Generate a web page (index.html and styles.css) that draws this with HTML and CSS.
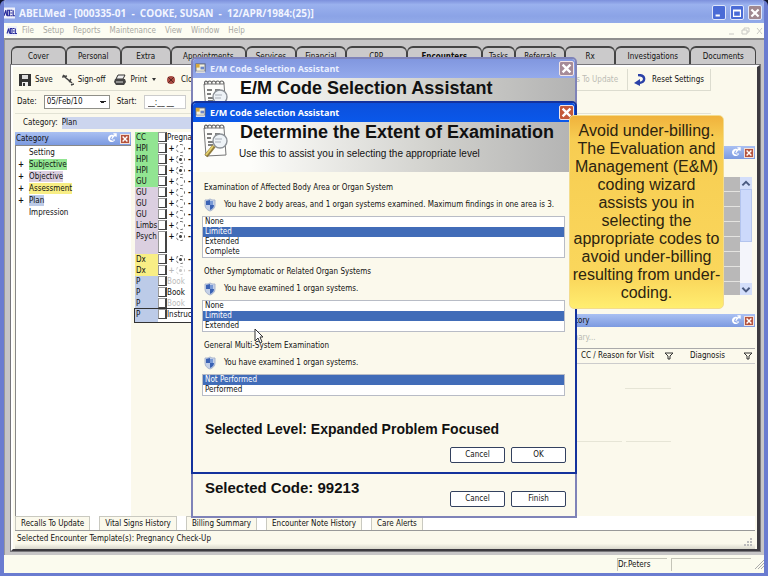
FILE: index.html
```html
<!DOCTYPE html>
<html lang="en">
<head>
    <meta charset="UTF-8">
    <meta name="viewport" content="width=device-width, initial-scale=1.0">
    <title>ABELMed</title>
    <link rel="stylesheet" href="styles.css">
</head>
<body>

    <!-- shared icons -->
    <svg class="sprite" aria-hidden="true">
        <symbol id="logo" viewBox="0 0 12 12">
            <rect width="12" height="12" fill="#eef0fb"/>
            <path d="M0 9L2 3L3 9M4 3V9H6V3ZM7 3H9M7 6H9M7 9H9M10 3V9H12" fill="none" stroke="#2b2e9c" stroke-width="1.3"/>
        </symbol>
        <symbol id="x" viewBox="0 0 10 10">
            <path d="M2 2L8 8M8 2L2 8" stroke="#fff" stroke-width="1.8"/>
        </symbol>
        <symbol id="form" viewBox="0 0 12 12">
            <rect x="1" y="1" width="10" height="8" fill="#f4f1dc" stroke="#555b70"/>
            <rect x="1" y="1" width="4" height="4" fill="#d8a93c"/>
            <rect x="6" y="4" width="4" height="3" fill="#6b86c8"/>
            <path d="M1 10H11" stroke="#ddd" stroke-width="2"/>
        </symbol>
        <symbol id="notes" viewBox="0 0 26 34">
            <path d="M2 4H22L24 31L4 32Z" fill="#fdfdfb" stroke="#777"/>
            <path d="M3 5C1 0 6 0 6 4C5 0 10 0 10 4C9 0 14 0 14 4C13 0 18 0 18 4C17 0 22 0 22 4" fill="none" stroke="#666" stroke-width="1.2"/>
            <path d="M5 10H10M13 10H18M5 14H9M6 18H11M6 21H11" stroke="#555" stroke-width="1.4"/>
            <circle cx="18" cy="17" r="7" fill="#eef3f7" stroke="#8d9298" stroke-width="1.4"/>
            <path d="M13 15H20M13 18H19" stroke="#a9afb8"/>
            <path d="M12 22L4 32" stroke="#8f7a3b" stroke-width="4"/>
            <path d="M11 22L4 31" stroke="#e3cf6c" stroke-width="2"/>
        </symbol>
        <symbol id="shield" viewBox="0 0 12 14">
            <path d="M6 1C8 2 9 2 11 2V7C11 10 9 12 6 13C3 12 1 10 1 7V2C3 2 4 2 6 1Z" fill="#c3d0e8" stroke="#a9b5cd"/>
            <path d="M6 2V7H10C10 10 8 11 6 12V7H2V3Z" fill="#3a62b4"/>
            <path d="M6 3L9 3V7H6Z" fill="#7899d6"/>
        </symbol>
        <symbol id="pin" viewBox="0 0 12 12">
            <path d="M9 3A4 4 0 1 0 10 7L7 7L7 4Z" fill="#fff"/>
            <path d="M6 6L11 1M8 1H11V4" fill="none" stroke="#fff" stroke-width="1.4"/>
            <path d="M6 4L5 7L8 8" fill="none" stroke="#6b8de0"/>
        </symbol>
        <symbol id="funnel" viewBox="0 0 10 8">
            <path d="M1 1H9L6 4V7H4V4Z" fill="none" stroke="#333"/>
        </symbol>
    </svg>

    <div class="app">
        <header class="titlebar">
            <svg class="logo"><use href="#logo"/></svg>
            <h1>ABELMed - [000335-01 &nbsp;- &nbsp;COOKE, SUSAN &nbsp;- &nbsp;12/APR/1984:(25)]</h1>
            <button class="win-btn" aria-label="Minimize"><svg viewBox="0 0 14 14"><path d="M3 10H8" stroke="#fff" stroke-width="2.4"/></svg></button>
            <button class="win-btn" aria-label="Maximize"><svg viewBox="0 0 14 14"><path d="M3 3.500H11V11H3ZM3 4.500H11" fill="none" stroke="#fff" stroke-width="1.4"/></svg></button>
            <button class="win-btn win-close" aria-label="Close"><svg viewBox="0 0 10 10"><use href="#x"/></svg></button>
        </header>

        <nav class="menu">
            <svg class="menu-logo"><use href="#logo"/></svg>
            <a href="#">File</a>
            <a href="#">Setup</a>
            <a href="#">Reports</a>
            <a href="#">Maintenance</a>
            <a href="#">View</a>
            <a href="#">Window</a>
            <a href="#">Help</a>
            <svg class="mdi" viewBox="0 0 36 8"><path d="M1 7H6M14 3H19V7H14ZM16 3V1H21V5H19M29 1L34 7M34 1L29 7" fill="none" stroke="#c9c9c4"/></svg>
        </nav>

        <main class="workspace">
            <div class="tabs">
                <button>Cover</button>
                <button>Personal</button>
                <button>Extra</button>
                <button>Appointments</button>
                <button>Services</button>
                <button>Financial</button>
                <button>CPP</button>
                <button class="active">Encounters</button>
                <button>Tasks</button>
                <button>Referrals</button>
                <button>Rx</button>
                <button>Investigations</button>
                <button>Documents</button>
            </div>

            <div class="panel">
                <div class="toolbar">
                    <button><svg class="tool-icon" viewBox="0 0 12 12"><path d="M0 0H12V12H0Z" fill="#333"/><path d="M3 1H9V5H3Z" fill="#ddd"/><path d="M3 8H9V12H3Z" fill="#eee"/><path d="M4 9H6V12H4Z" fill="#333"/></svg>Save</button>
                    <button><svg class="tool-icon" viewBox="0 0 12 12"><path d="M1 1L4 4M0 3L5 2M4 4L10 9M7 8L9 5M9 11L12 10" fill="none" stroke="#444" stroke-width="1.6"/></svg>Sign-off</button>
                    <button><svg class="tool-icon" viewBox="0 0 12 12"><path d="M4 1H11L9 5H2Z" fill="#eee" stroke="#333"/><path d="M1 5H11L12 8L10 11H2L0 8Z" fill="#444"/><path d="M2 8H9" stroke="#ddd"/></svg>Print <span class="caret"></span></button>
                    <button><svg class="tool-icon" viewBox="0 0 12 12"><circle cx="6" cy="6" r="4" fill="#a94b43"/><path d="M3 3L9 9M9 3L3 9" stroke="#5c2620"/></svg>Close</button>
                    <button class="update" disabled>Recalls To Update</button>
                    <button class="reset"><svg class="tool-icon" viewBox="0 0 12 12"><path d="M4 1C12 1 12 8 5 9" fill="none" stroke="#2b41a8" stroke-width="2.4"/><path d="M6 5V12L0 9Z" fill="#2b41a8"/></svg>Reset Settings</button>
                </div>

                <div class="fields">
                    <label for="date">Date:</label>
                    <select id="date"><option>05/Feb/10</option></select>
                    <label for="start">Start:</label>
                    <input id="start" type="text" value="__:__ __">
                </div>

                <div class="category-row">
                    <label for="category">Category:</label>
                    <input id="category" type="text" value="Plan">
                </div>

                <div class="content">
                    <aside class="tree">
                        <div class="bar">
                            <h2>Category</h2>
                            <svg class="pin"><use href="#pin"/></svg>
                            <button class="bar-close" aria-label="Close"><svg viewBox="0 0 10 10"><use href="#x"/></svg></button>
                        </div>
                        <ul>
                            <li>Setting</li>
                            <li class="node"><span class="green">Subjective</span></li>
                            <li class="node"><span class="mauve">Objective</span></li>
                            <li class="node"><span class="yellow">Assessment</span></li>
                            <li class="node"><span class="blue">Plan</span></li>
                            <li>Impression</li>
                        </ul>
                    </aside>

                    <section class="notes">
                        <div class="note"><b class="green">CC</b><input type="checkbox" aria-label="CC"><span>Pregnancy</span></div>
                        <div class="note"><b class="green">HPI</b><input type="checkbox" aria-label="HPI"><i>+</i><input type="radio" aria-label="HPI"><i>-</i></div>
                        <div class="note"><b class="green">HPI</b><input type="checkbox" aria-label="HPI"><i>+</i><input type="radio" aria-label="HPI" checked><i>-</i></div>
                        <div class="note"><b class="green">HPI</b><input type="checkbox" aria-label="HPI"><i>+</i><input type="radio" aria-label="HPI" checked><i>-</i></div>
                        <div class="note"><b class="green">GU</b><input type="checkbox" aria-label="GU"><i>+</i><input type="radio" aria-label="GU"><i>-</i></div>
                        <div class="note"><b class="mauve">GU</b><input type="checkbox" aria-label="GU"><i>+</i><input type="radio" aria-label="GU"><i>-</i></div>
                        <div class="note"><b class="mauve">GU</b><input type="checkbox" aria-label="GU"><i>+</i><input type="radio" aria-label="GU"><i>-</i></div>
                        <div class="note"><b class="mauve">GU</b><input type="checkbox" aria-label="GU"><i>+</i><input type="radio" aria-label="GU"><i>-</i></div>
                        <div class="note"><b class="mauve">Limbs</b><input type="checkbox" aria-label="Limbs"><i>+</i><input type="radio" aria-label="Limbs"><i>-</i></div>
                        <div class="note tall"><b class="mauve">Psych</b><input type="checkbox" aria-label="Psych"><i>+</i><input type="radio" aria-label="Psych" checked><i>-</i></div>
                        <div class="note"><b class="yellow">Dx</b><input type="checkbox" aria-label="Dx"><i>+</i><input type="radio" aria-label="Dx" checked><i>-</i></div>
                        <div class="note off"><b class="yellow">Dx</b><input type="checkbox" aria-label="Dx"><i>+</i><input type="radio" aria-label="Dx" checked><i>-</i></div>
                        <div class="note off"><b class="blue">P</b><input type="checkbox" aria-label="Plan"><span>Book</span></div>
                        <div class="note"><b class="blue">P</b><input type="checkbox" aria-label="Plan"><span>Book</span></div>
                        <div class="note off"><b class="blue">P</b><input type="checkbox" aria-label="Plan"><span>Book</span></div>
                        <div class="note current"><b class="blue">P</b><input type="checkbox" aria-label="Plan"><span>Instructions</span></div>
                    </section>

                    <section class="side">
                        <div class="bar">
                            <svg class="pin"><use href="#pin"/></svg>
                            <button class="bar-close" aria-label="Close"><svg viewBox="0 0 10 10"><use href="#x"/></svg></button>
                        </div>
                        <div class="grid">
                            <div class="cells"></div>
                            <div class="scroll">
                                <svg viewBox="0 0 10 10"><path d="M2 7L5 4L8 7" fill="none" stroke="#4a5a80" stroke-width="1.6"/></svg>
                                <div class="thumb"></div>
                                <svg viewBox="0 0 10 10"><path d="M2 4L5 7L8 4" fill="none" stroke="#4a5a80" stroke-width="1.6"/></svg>
                            </div>
                        </div>
                        <div class="bar history">
                            <h2>History</h2>
                            <svg class="pin"><use href="#pin"/></svg>
                            <button class="bar-close" aria-label="Close"><svg viewBox="0 0 10 10"><use href="#x"/></svg></button>
                        </div>
                        <p class="summary">Summary...</p>
                        <table class="visits">
                            <tr>
                                <th class="reason">CC / Reason for Visit</th>
                                <th class="filter"><svg class="funnel"><use href="#funnel"/></svg></th>
                                <th class="diagnosis">Diagnosis</th>
                                <th class="filter"><svg class="funnel"><use href="#funnel"/></svg></th>
                            </tr>
                        </table>
                        <div class="rules"><hr><div><hr><hr></div></div>
                    </section>
                </div>

                <div class="bottom-tabs">
                    <button>Recalls To Update</button>
                    <button>Vital Signs History</button>
                    <button>Billing Summary</button>
                    <button>Encounter Note History</button>
                    <button>Care Alerts</button>
                </div>
                <div class="template">
                    <p>Selected Encounter Template(s): Pregnancy Check-Up</p>
                    <svg class="grip" viewBox="0 0 9 9"><path d="M7 1H9M4 4H6M7 4H9M1 7H3M4 7H6M7 7H9" stroke="#bbb" stroke-width="2"/></svg>
                </div>
            </div>
        </main>

        <footer class="status">
            <span class="doctor">Dr.Peters</span>
            <span class="blank"></span>
            <svg class="grip" viewBox="0 0 9 9"><path d="M0 9L9 0M3 9L9 3M6 9L9 6" stroke="#aaa"/></svg>
        </footer>
    </div>

    <section class="dialog dialog-back">
        <div class="dialog-title">
            <svg class="form"><use href="#form"/></svg>
            <h2>E/M Code Selection Assistant</h2>
            <button class="dialog-close" aria-label="Close"><svg viewBox="0 0 10 10"><use href="#x"/></svg></button>
        </div>
        <div class="banner">
            <svg class="notes-icon"><use href="#notes"/></svg>
            <div><h3>E/M Code Selection Assistant</h3></div>
        </div>
        <div class="dialog-foot">
            <p class="result code">Selected Code: 99213</p>
            <div class="buttons">
                <button>Cancel</button>
                <button>Finish</button>
            </div>
        </div>
    </section>

    <section class="dialog dialog-front">
        <div class="dialog-title">
            <svg class="form"><use href="#form"/></svg>
            <h2>E/M Code Selection Assistant</h2>
            <button class="dialog-close" aria-label="Close"><svg viewBox="0 0 10 10"><use href="#x"/></svg></button>
        </div>
        <div class="banner">
            <svg class="notes-icon"><use href="#notes"/></svg>
            <div>
                <h3>Determine the Extent of Examination</h3>
                <p>Use this to assist you in selecting the appropriate level</p>
            </div>
        </div>
        <div class="dialog-body">
            <div class="group">
                <label for="affected">Examination of Affected Body Area or Organ System</label>
                <p><svg class="shield"><use href="#shield"/></svg>You have 2 body areas, and 1 organ systems examined. Maximum findings in one area is 3.</p>
                <select id="affected" size="4">
                    <option>None</option>
                    <option selected>Limited</option>
                    <option>Extended</option>
                    <option>Complete</option>
                </select>
            </div>
            <div class="group">
                <label for="related">Other Symptomatic or Related Organ Systems</label>
                <p><svg class="shield"><use href="#shield"/></svg>You have examined 1 organ systems.</p>
                <select id="related" size="3">
                    <option>None</option>
                    <option selected>Limited</option>
                    <option>Extended</option>
                </select>
            </div>
            <div class="group">
                <label for="general">General Multi-System Examination</label>
                <p><svg class="shield"><use href="#shield"/></svg>You have examined 1 organ systems.</p>
                <select id="general" size="2">
                    <option selected>Not Performed</option>
                    <option>Performed</option>
                </select>
            </div>
        </div>
        <div class="dialog-foot">
            <p class="result">Selected Level: Expanded Problem Focused</p>
            <div class="buttons">
                <button>Cancel</button>
                <button>OK</button>
            </div>
        </div>
    </section>

    <div class="callout">Avoid under-billing. The Evaluation and Management (E&amp;M) coding wizard assists you in selecting the appropriate codes to avoid under-billing resulting from under-coding.</div>

    <svg class="cursor" viewBox="0 0 10 16"><path d="M1 1V13L4 10L6 15L8 14L6 9H9Z" fill="#fff" stroke="#333"/></svg>

</body>
</html>
```

FILE: styles.css
```css
* {
    box-sizing: border-box;
}

body {
    margin: 0;
    background: #10142c;
    font-family: "DejaVu Sans Condensed", "DejaVu Sans", sans-serif;
    font-size: 8px;
    line-height: 12px;
    color: #111;
}

h1, h2, h3, p, ul {
    margin: 0;
    padding: 0;
    font-size: inherit;
}

button, input, select {
    margin: 0;
    padding: 0;
    border: 0;
    border-radius: 0;
    background: none;
    font: inherit;
    color: inherit;
}

svg {
    display: block;
    flex-shrink: 0;
}

.sprite {
    position: absolute;
    width: 0;
    height: 0;
}

.app {
    display: flex;
    flex-direction: column;
    height: 100vh;
    border: 4px solid #6a7cd0;
    border-top: 0;
    border-bottom-width: 3px;
    border-radius: 6px 6px 0 0;
    overflow: hidden;
    background: #fbfbee;
}

/* main window title */
.titlebar {
    display: flex;
    align-items: center;
    gap: 4px;
    height: 23px;
    padding-top: 2px;
    flex-shrink: 0;
    background: linear-gradient(#7c90dc, #9ab1ee 20%, #8ba3e6 70%, #93abe9);
}

.titlebar h1 {
    flex: 1;
    font-family: "Open Sans", sans-serif;
    font-size: 10px;
    font-weight: bold;
    color: #f2f5ff;
}

.logo {
    width: 11px;
    height: 12px;
}

.win-btn {
    width: 14px;
    height: 15px;
    border: 1px solid #dfe6fb;
    border-radius: 2px;
    background: #4a6bd6;
}

.win-close {
    margin-right: 2px;
    background: #a0888f;
}

/* menu */
.menu {
    display: flex;
    align-items: center;
    gap: 9px;
    height: 15px;
    padding-left: 2px;
    flex-shrink: 0;
    background: #fdfdf2;
}

.menu a {
    color: #a8a8a2;
    text-decoration: none;
}

.menu-logo {
    width: 12px;
    height: 10px;
    margin-right: -5px;
}

.mdi {
    width: 36px;
    height: 8px;
    margin-left: auto;
}

/* workspace and tabs */
.workspace {
    flex: 1;
    display: flex;
    flex-direction: column;
    padding: 6px 4px 4px 6px;
    min-height: 0;
    border-top: 2px solid #8e8e8e;
    border-left: 1px solid #999;
    background: #c6c5c6;
}

.tabs {
    display: flex;
    height: 19px;
    padding-right: 4px;
    flex-shrink: 0;
}

.tabs button {
    flex: 54 1 0;
    min-width: 0;
    border: 1px solid #444;
    border-width: 2px 1px 0;
    border-radius: 6px 6px 0 0;
    background: #cbcacb;
}

.tabs button:nth-child(4),
.tabs button:nth-child(8),
.tabs button:nth-child(12) {
    flex-grow: 75;
}

.tabs button:nth-child(3),
.tabs button:nth-child(5),
.tabs button:nth-child(6),
.tabs button:nth-child(10),
.tabs button:nth-child(11) {
    flex-grow: 49;
}

.tabs button:nth-child(7) {
    flex-grow: 60;
}

.tabs button:nth-child(9) {
    flex-grow: 32;
}

.tabs button:nth-child(13) {
    flex-grow: 65;
}

.tabs .active {
    font-weight: bold;
}

.panel {
    flex: 1;
    display: flex;
    flex-direction: column;
    min-height: 0;
    padding: 2px 2px 0;
    border: 2px solid #fff;
    border-right: 3px solid #3c3a40;
    border-bottom: 2px solid #3c3a40;
    outline: 1px solid #77767a;
    background: #fbf9ec;
}

/* toolbar */
.toolbar {
    display: flex;
    gap: 9px;
    height: 22px;
    padding-left: 4px;
    flex-shrink: 0;
    margin-right: 44px;
    border: 1px solid #dcdccf;
    border-width: 0 1px 1px 0;
}

.toolbar button {
    display: flex;
    align-items: center;
    gap: 4px;
}

.tool-icon {
    width: 12px;
    height: 12px;
}

.caret {
    margin-left: 1px;
    border: 2px solid transparent;
    border-top: 3px solid #333;
    border-bottom: 0;
}

.toolbar .update {
    margin-left: auto;
    color: #bcbcb4;
}

.toolbar .reset {
    gap: 6px;
    padding: 0 6px;
    border-left: 1px solid #dcdccf;
}

.fields {
    display: flex;
    align-items: center;
    gap: 7px;
    height: 22px;
    padding-left: 2px;
    flex-shrink: 0;
}

.fields select,
.fields input {
    height: 14px;
    border: 1px solid #8f8f88;
    background: #fff;
}

.fields select {
    appearance: none;
    width: 66px;
    padding-left: 2px;
    background-image: linear-gradient(45deg, transparent 50%, #222 50%), linear-gradient(-45deg, transparent 50%, #222 50%);
    background-position: right 6px top 5px, right 3px top 5px;
    background-size: 3px 3px;
    background-repeat: no-repeat;
}

.fields input {
    width: 42px;
    padding-left: 3px;
    border-color: #ccc;
}

.category-row {
    display: flex;
    align-items: center;
    gap: 4px;
    height: 19px;
    padding-left: 8px;
    margin-right: 44px;
    flex-shrink: 0;
    border-top: 1px solid #e2e2d4;
}

.category-row input {
    flex: 1;
    height: 12px;
    background: #ccd5ee;
}

/* content columns */
.content {
    flex: 1;
    display: flex;
    gap: 4px;
    min-height: 0;
}

.bar {
    display: flex;
    align-items: center;
    gap: 3px;
    height: 13px;
    flex-shrink: 0;
    padding: 0 1px;
    background: linear-gradient(#a9c0f2, #7c9ae0);
}

.bar h2 {
    flex: 1;
    font-weight: normal;
}

.pin {
    width: 11px;
    height: 11px;
    margin-left: auto;
}

.bar-close {
    width: 10px;
    height: 10px;
    border: 1px solid #f2dfd8;
    background: #b5533d;
}

.tree {
    display: flex;
    flex-direction: column;
    width: 116px;
}

.tree ul {
    flex: 1;
    padding: 1px 0 0 13px;
    list-style: none;
    border-left: 1px solid #888;
    border-top: 1px solid #888;
    background: #fff;
}

.tree li {
    position: relative;
    line-height: 12px;
}

.tree span {
    display: inline-block;
    height: 11px;
    line-height: 11px;
}

/* expand mark in the gutter of the tree */
.node::before {
    content: "+";
    position: absolute;
    left: -11px;
    font-weight: bold;
}

.green {
    background: #92e592;
}

.mauve {
    background: #dbcfe0;
}

.yellow {
    background: #f8ee85;
}

.blue {
    background: #bccbe8;
}

.notes {
    width: 320px;
    align-self: flex-start;
    background: #fff;
}

.note {
    display: flex;
    height: 11px;
    line-height: 11px;
}

.note b {
    width: 23px;
    padding-left: 1px;
    font-weight: normal;
}

.note i {
    width: 9px;
    text-align: center;
    font-style: normal;
    font-weight: bold;
}

.note input[type="checkbox"] {
    appearance: none;
    width: 9px;
    height: 10px;
    border: 1px solid #999;
    border-right: 2px solid #444;
    border-bottom-color: #444;
    background: #fff;
}

.note input[type="radio"] {
    appearance: none;
    width: 9px;
    height: 9px;
    margin-top: 1px;
    border: 1px dashed #666;
    border-radius: 50%;
}

.note input[type="radio"]:checked {
    background: radial-gradient(#444 1px, #fff 2px);
}

.note.tall {
    height: 23px;
}

.note.tall input[type="checkbox"] {
    height: 22px;
}

.off span,
.off i,
.off input[type="radio"] {
    opacity: 0.3;
}

.note.current {
    height: 13px;
    outline: 1px solid #333;
}

/* right column */
.side {
    flex: 1;
    display: flex;
    flex-direction: column;
    padding-top: 14px;
}

.grid {
    display: flex;
    height: 118px;
    margin: 18px 3px 19px 0;
}

.cells {
    flex: 1;
    background: repeating-linear-gradient(#b9b8b8 0 14px, #e4e3e0 14px 15px);
}

.scroll {
    display: flex;
    flex-direction: column;
    justify-content: space-between;
    width: 12px;
    background: #f4f5fb;
}

.scroll svg {
    height: 12px;
    background: #d3defa;
}

.thumb {
    flex: 1;
    margin-bottom: 41px;
    border: 1px solid #b3c4ee;
    background: #ccd9fb;
}

.history h2 {
    padding-left: 104px;
}

.summary {
    padding: 4px 0 3px 96px;
    line-height: 14px;
    color: #b9b9b2;
}

.visits {
    width: 100%;
    table-layout: fixed;
    border-collapse: collapse;
    border-top: 1px solid #aaa;
    border-bottom: 1px solid #ccc;
}

.visits th {
    padding: 1px 0;
    font-weight: normal;
    text-align: left;
    white-space: nowrap;
}

.visits .reason {
    width: 205px;
    padding-left: 122px;
}

.visits .filter {
    width: 12px;
}

.visits .diagnosis {
    padding-left: 14px;
}

.funnel {
    width: 10px;
    height: 8px;
}

.rules {
    padding: 24px 84px 0 118px;
}

.rules hr {
    flex: 1;
    margin: 0 0 52px;
    border: 0;
    border-top: 1px solid #e6e5d6;
}

.rules > hr {
    margin-left: 48px;
}

.rules div {
    display: flex;
    gap: 4px;
}

/* bottom of the panel */
.bottom-tabs {
    display: flex;
    gap: 9px;
    height: 15px;
    flex-shrink: 0;
    border-bottom: 1px solid #999;
    background: #fff;
}

.bottom-tabs button {
    padding: 0 5px;
    border: 1px solid #c9c9c0;
    border-bottom: 0;
    background: #fbf9ec;
}

.template {
    display: flex;
    justify-content: space-between;
    align-items: flex-end;
    height: 18px;
    flex-shrink: 0;
    padding: 0 3px 2px 2px;
    background: linear-gradient(#fbf9ec 70%, #d8d7cc);
}

.template p {
    align-self: center;
}

.grip {
    width: 9px;
    height: 9px;
}

.status {
    display: flex;
    align-items: center;
    justify-content: flex-end;
    gap: 4px;
    height: 18px;
    flex-shrink: 0;
    background: #fbfbee;
}

.doctor,
.blank {
    height: 13px;
    border: 1px solid #c4c4b8;
    border-width: 1px 0 0 1px;
}

.doctor {
    width: 50px;
}

.blank {
    width: 80px;
}

/* dialogs */
.dialog {
    position: absolute;
    left: 191px;
    width: 386px;
    display: flex;
    flex-direction: column;
    border: 2px solid #7f83b8;
    border-radius: 5px 5px 0 0;
    overflow: hidden;
    background: #fbf9ec;
}

.dialog-back {
    top: 57px;
    height: 461px;
}

.dialog-front {
    top: 101px;
    height: 373px;
    border-color: #14329c;
}

.dialog-title {
    display: flex;
    align-items: center;
    gap: 4px;
    height: 19px;
    flex-shrink: 0;
    padding: 0 1px 0 2px;
    color: #eaf0ff;
    background: linear-gradient(#8197df, #94aaec);
}

.dialog-front .dialog-title {
    color: #fff;
    background: linear-gradient(#0c50dc, #0a58ea);
}

.dialog-title h2 {
    flex: 1;
    font-family: "Open Sans", sans-serif;
    font-size: 9px;
    font-weight: bold;
}

.form {
    width: 11px;
    height: 11px;
}

.dialog-close {
    width: 15px;
    height: 15px;
    border: 1px solid #f3e5e5;
    border-radius: 2px;
    background: #a58b98;
}

.dialog-front .dialog-close {
    background: #c4593a;
}

.banner {
    display: flex;
    gap: 8px;
    height: 50px;
    flex-shrink: 0;
    padding-left: 9px;
    font-family: "Liberation Sans", Arial, sans-serif;
    background: linear-gradient(90deg, #fdfdfa 15%, #cfcfcb 65%, #b3b3b3);
}

.notes-icon {
    width: 26px;
    height: 34px;
    margin-top: 2px;
}

.banner h3 {
    padding-left: 4px;
    font-size: 18px;
    line-height: 20px;
}

.banner p {
    padding-left: 3px;
    margin-top: 5px;
    font-size: 10px;
    line-height: 14px;
}

.dialog-body {
    display: flex;
    flex-direction: column;
    gap: 9px;
    padding: 11px 10px 0 9px;
}

.group {
    display: flex;
    flex-direction: column;
}

.group label {
    padding-left: 2px;
    line-height: 10px;
}

.group p {
    display: flex;
    align-items: center;
    gap: 8px;
    height: 23px;
    padding-left: 2px;
    white-space: nowrap;
}

.shield {
    width: 12px;
    height: 14px;
}

.group select {
    display: block;
    width: 100%;
    padding: 0;
    border: 1px solid #b8bcc6;
    line-height: 10px;
    background: #fff;
    overflow: hidden;
}

.group option {
    height: 10px;
    min-height: 10px;
    padding: 0 2px;
    line-height: 10px;
}

.group option:checked {
    color: #fff;
    background: #416cb8 linear-gradient(#416cb8, #416cb8);
}

.dialog-foot {
    margin-top: auto;
    padding: 0 9px 9px;
}

.result {
    padding-left: 3px;
    font-family: "Liberation Sans", Arial, sans-serif;
    font-size: 14px;
    font-weight: bold;
    line-height: 20px;
    margin-bottom: 8px;
}

.code {
    margin-bottom: -7px;
    font-size: 15px;
}

.buttons {
    display: flex;
    justify-content: flex-end;
    gap: 6px;
}

.buttons button {
    width: 55px;
    height: 16px;
    border: 1px solid #33415f;
    border-radius: 2px;
    background: #fff;
}

/* yellow note over everything */
.callout {
    position: absolute;
    left: 569px;
    top: 115px;
    width: 155px;
    padding: 6px 2px;
    border: 1px solid #f3dc8c;
    border-radius: 5px;
    font-family: "Liberation Sans", Arial, sans-serif;
    font-size: 16px;
    line-height: 18px;
    text-align: center;
    color: #2c2410;
    background: linear-gradient(#f0b23c, #f7cd52 12%, #fad75c 85%, #ffee70);
}

.cursor {
    position: absolute;
    left: 254px;
    top: 328px;
    width: 10px;
    height: 16px;
}
```
